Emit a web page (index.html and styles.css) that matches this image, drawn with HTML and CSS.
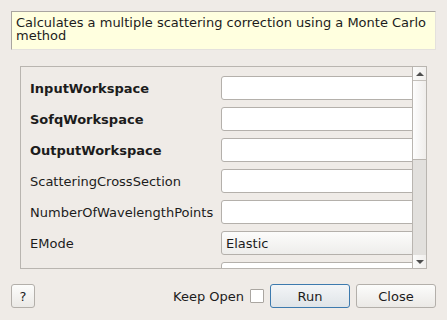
FILE: index.html
```html
<!DOCTYPE html>
<html lang="en">

<head>
  <meta charset="UTF-8">
  <title>MultipleScatteringCorrection</title>
  <link rel="stylesheet" href="styles.css">
</head>

<body>
  <div class="dialog">
    <div class="summary">Calculates a multiple scattering correction using a Monte Carlo method</div>

    <div class="props">
      <div class="props-body">
        <div class="prop-row">
          <span class="prop-name mandatory">InputWorkspace</span>
          <input class="field" type="text">
        </div>
        <div class="prop-row">
          <span class="prop-name mandatory">SofqWorkspace</span>
          <input class="field" type="text">
        </div>
        <div class="prop-row">
          <span class="prop-name mandatory">OutputWorkspace</span>
          <input class="field" type="text">
        </div>
        <div class="prop-row">
          <span class="prop-name">ScatteringCrossSection</span>
          <input class="field" type="text">
        </div>
        <div class="prop-row">
          <span class="prop-name">NumberOfWavelengthPoints</span>
          <input class="field" type="text">
        </div>
        <div class="prop-row">
          <span class="prop-name">EMode</span>
          <div class="field combo">Elastic</div>
        </div>
        <!-- next row is scrolled out of view, only its field's top edge shows -->
        <div class="prop-row">
          <span class="prop-name"></span>
          <input class="field" type="text">
        </div>
      </div>
      <div class="scrollbar">
        <div class="sb-arrow sb-up"></div>
        <div class="sb-handle"></div>
        <div class="sb-track"></div>
        <div class="sb-arrow sb-down"></div>
      </div>
    </div>

    <div class="buttons">
      <button class="btn help">?</button>
      <span class="spacer"></span>
      <span class="keep-open">Keep Open</span>
      <span class="checkbox"></span>
      <button class="btn run">Run</button>
      <button class="btn">Close</button>
    </div>
  </div>
</body>

</html>
```

FILE: styles.css
```css
body {
  margin: 0;
  background-color: #efebe7;
  font-family: "DejaVu Sans", sans-serif;
  font-size: 13px;
  color: #1c1c1c;
}

.dialog {
  display: flex;
  flex-direction: column;
  height: 320px;
  padding: 11px 11px 12px;
  box-sizing: border-box;
}

.summary {
  height: 39px;
  box-sizing: border-box;
  padding: 4px 4px;
  line-height: 13px;
  background-color: #ffffdf;
  border: 1px solid;
  border-color: #a9a5a0 #e4e1dd #e4e1dd #a9a5a0;
}

.props {
  display: flex;
  height: 203px;
  margin: 16px 9px 0;
  box-sizing: border-box;
  border: 1px solid #b9b5b0;
}

.props-body {
  flex: 1;
  display: flex;
  flex-direction: column;
  gap: 7px;
  padding: 9px 0 0 9px;
  overflow: hidden;
}

.prop-row {
  display: flex;
  align-items: center;
  height: 24px;
  flex: none;
}

.prop-name {
  width: 191px;
  flex: none;
  white-space: nowrap;
}

.mandatory {
  font-weight: bold;
}

.field {
  width: 200px;
  height: 24px;
  flex: none;
  margin: 0;
  padding: 0 4px;
  box-sizing: border-box;
  border: 1px solid #b4b0ab;
  border-radius: 3px;
  background-color: #fff;
  font: inherit;
}

.combo {
  display: flex;
  align-items: center;
  background: linear-gradient(#fcfcfb, #eeedeb);
}

.scrollbar {
  width: 13px;
  display: flex;
  flex-direction: column;
  border-left: 1px solid #b9b5b0;
}

.sb-arrow {
  height: 13px;
  flex: none;
  display: flex;
  align-items: center;
  justify-content: center;
  background: linear-gradient(90deg, #fbfbfa, #f1efed);
}

.sb-arrow::after {
  content: "";
  border-left: 4px solid transparent;
  border-right: 4px solid transparent;
}

.sb-up {
  border-bottom: 1px solid #c4c0bb;
}

.sb-up::after {
  border-bottom: 4px solid #4e4e4e;
}

.sb-down::after {
  border-top: 4px solid #4e4e4e;
}

.sb-handle {
  height: 78px;
  flex: none;
  border-bottom: 1px solid #b9b5b0;
  background: linear-gradient(90deg, #fdfdfd, #efedeb);
}

.sb-track {
  flex: 1;
  background-color: #e2e0dd;
}

.buttons {
  display: flex;
  align-items: center;
  margin-top: 15px;
  height: 24px;
}

.spacer {
  flex: 1;
}

.btn {
  width: 80px;
  height: 24px;
  margin: 0 0 0 6px;
  padding: 0;
  box-sizing: border-box;
  border: 1px solid #b3afaa;
  border-radius: 3px;
  background: linear-gradient(#fcfcfb, #ebe9e6);
  font: inherit;
  color: #1c1c1c;
}

.help {
  width: 24px;
  margin-left: 0;
}

.run {
  border-color: #3d7aae;
  background: linear-gradient(#f3f5f7, #dfe4e8);
}

.keep-open {
  margin-right: 6px;
}

.checkbox {
  width: 14px;
  height: 14px;
  box-sizing: border-box;
  border: 1px solid #aaa6a1;
  border-radius: 1px;
  background-color: #fff;
}
```
